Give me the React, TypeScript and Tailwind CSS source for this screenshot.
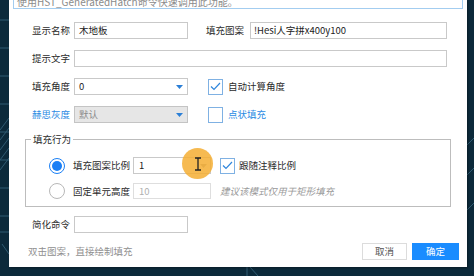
const font = { fontFamily: '"Noto Sans CJK SC", "Noto Sans", sans-serif' };

function Caret({ color = '#2b7fd6' }: { color?: string }) {
  return (
    <svg width="7" height="4" viewBox="0 0 7 4" className="shrink-0">
      <path d="M0 0 H7 L3.5 4 Z" fill={color} />
    </svg>
  );
}

function Checkbox({ checked }: { checked?: boolean }) {
  return (
    <div className="flex h-[16px] w-[15px] shrink-0 items-center justify-center border border-[#7fb1e3] bg-white">
      {checked && (
        <svg width="11" height="9" viewBox="0 0 11 9">
          <path d="M1 4.5 L4 7.5 L10 1" fill="none" stroke="#2f86dc" strokeWidth="1.2" />
        </svg>
      )}
    </div>
  );
}

function Radio({ checked }: { checked?: boolean }) {
  return (
    <div
      className={`flex h-[16px] w-[16px] shrink-0 items-center justify-center rounded-full border ${
        checked ? 'border-[#1a7ff5]' : 'border-[#b8b8b8]'
      } bg-white`}
    >
      {checked && <div className="h-[10px] w-[10px] rounded-full bg-[#1a7ff5]" />}
    </div>
  );
}

function Label({ children, blue }: { children: React.ReactNode; blue?: boolean }) {
  return (
    <div className={`w-[42px] shrink-0 whitespace-nowrap ${blue ? 'text-[#2c8be3]' : 'text-[#2b2b2b]'}`}>
      {children}
    </div>
  );
}

function Backdrop() {
  return (
    <svg className="absolute inset-0" width="474" height="276" viewBox="0 0 474 276">
      <g stroke="#2f5b72" strokeWidth="1" fill="none">
        <path d="M0 20 L9 20 M0 48 L9 48 M0 76 L9 76 M0 104 L9 104 M0 132 L9 132 M0 160 L9 160 M0 188 L9 188 M0 216 L9 216" />
        <path d="M0 130 L9 118 M0 140 L9 128 M0 150 L9 138 M0 160 L9 148 M0 170 L9 158" />
        <path d="M0 232 L9 232 M2 244 L9 254" />
        <path d="M247 267 L247 276 M250 267 L258 276" />
        <path d="M467 145 L474 138 M467 175 L474 168 M467 210 L474 203" />
      </g>
    </svg>
  );
}

export default function App() {
  return (
    <div className="relative flex h-[276px] w-[474px] overflow-hidden bg-[#0c2a3b] pl-[9px] text-[9.5px]" style={font}>
      <Backdrop />
      <div className="relative flex h-[267px] w-[458px] flex-col bg-white shadow-[1px_1px_2px_rgba(0,0,0,0.35)]">
        {/* tip */}
        <div className="ml-[4px] -mt-[5px] flex h-[14px] w-[450px] items-center border border-[#a3cdf0] pl-[3px] text-[10px] leading-none text-[#8a8a8a]">
          使用HST_GeneratedHatch命令快速调用此功能。
        </div>

        {/* row 1 */}
        <div className="mt-[13px] flex h-[17px] items-center pl-[23px]">
          <Label>显示名称</Label>
          <div className="flex h-[17px] w-[114px] items-center border border-[#c9c9c9] px-[4px] text-[#222]">木地板</div>
          <div className="ml-[18px] w-[44px] whitespace-nowrap text-[#2b2b2b]">填充图案</div>
          <div className="flex h-[17px] w-[197px] items-center border border-[#c9c9c9] px-[3px] text-[#222]">!Hesi人字拼x400y100</div>
        </div>

        {/* row 2 */}
        <div className="mt-[11px] flex h-[17px] items-center pl-[23px]">
          <Label>提示文字</Label>
          <div className="h-[17px] w-[373px] border border-[#c9c9c9]" />
        </div>

        {/* row 3 */}
        <div className="mt-[11px] flex h-[17px] items-center pl-[23px]">
          <Label>填充角度</Label>
          <div className="flex h-[17px] w-[114px] items-center justify-between border border-[#c9c9c9] pl-[4px] pr-[4px] text-[#222]">
            <span>0</span>
            <Caret />
          </div>
          <div className="ml-[20px]">
            <Checkbox checked />
          </div>
          <span className="ml-[5px] text-[#2b2b2b]">自动计算角度</span>
        </div>

        {/* row 4 */}
        <div className="mt-[11px] flex h-[17px] items-center pl-[23px]">
          <Label blue>赫思灰度</Label>
          <div className="flex h-[17px] w-[114px] items-center justify-between border border-[#c4c4c4] bg-[#e6e6e6] pl-[4px] pr-[4px] text-[#8a8a8a]">
            <span>默认</span>
            <Caret />
          </div>
          <div className="ml-[20px]">
            <Checkbox />
          </div>
          <span className="ml-[5px] text-[#2c8be3]">点状填充</span>
        </div>

        {/* group */}
        <div className="relative ml-[16px] mt-[16px] h-[68px] w-[426px] border border-[#bdbdbd]">
          <div className="absolute -top-[7px] left-[5px] bg-white px-[2px] leading-[13px] text-[#2b2b2b]">填充行为</div>

          <div className="mt-[17px] flex h-[17px] items-center pl-[23px]">
            <Radio checked />
            <span className="ml-[8px] w-[60px] whitespace-nowrap text-[#2b2b2b]">填充图案比例</span>
            <div className="relative flex h-[17px] w-[78px] items-center justify-between border border-[#c9c9c9] pl-[5px] pr-[3px] text-[#222]">
              <span>1</span>
              <Caret color="#a8a8a8" />
              <div className="absolute left-[48px] top-[-10px] flex h-[31px] w-[31px] items-center justify-center rounded-full bg-[#f4ae32]/85">
                <svg width="8" height="14" viewBox="0 0 8 14">
                  <path d="M1 1 H7 M4 1 V13 M1 13 H7" stroke="#222" strokeWidth="1.3" fill="none" />
                </svg>
              </div>
            </div>
            <div className="ml-[9px]">
              <Checkbox checked />
            </div>
            <span className="ml-[4px] text-[#2b2b2b]">跟随注释比例</span>
          </div>

          <div className="mt-[9px] flex h-[16px] items-center pl-[23px]">
            <Radio />
            <span className="ml-[8px] w-[60px] whitespace-nowrap text-[#2b2b2b]">固定单元高度</span>
            <div className="flex h-[16px] w-[78px] items-center border border-[#dedede] pl-[5px] text-[#b0b0b0]">10</div>
            <span className="ml-[9px] italic text-[#9a9a9a]">建议该模式仅用于矩形填充</span>
          </div>
        </div>

        {/* simplified command */}
        <div className="mt-[9px] flex h-[17px] items-center pl-[23px]">
          <Label>简化命令</Label>
          <div className="h-[17px] w-[114px] border border-[#c9c9c9]" />
        </div>

        {/* footer */}
        <div className="mt-[10px] flex h-[17px] items-center pl-[19px] pr-[8px]">
          <span className="text-[#8f8f8f]">双击图案，直接绘制填充</span>
          <div className="ml-auto flex gap-[5px]">
            <div className="flex h-[17px] w-[45px] items-center justify-center border border-[#dcdcdc] text-[#555]">取消</div>
            <div className="flex h-[17px] w-[47px] items-center justify-center bg-[#1a8cff] text-white">确定</div>
          </div>
        </div>
      </div>
    </div>
  );
}
